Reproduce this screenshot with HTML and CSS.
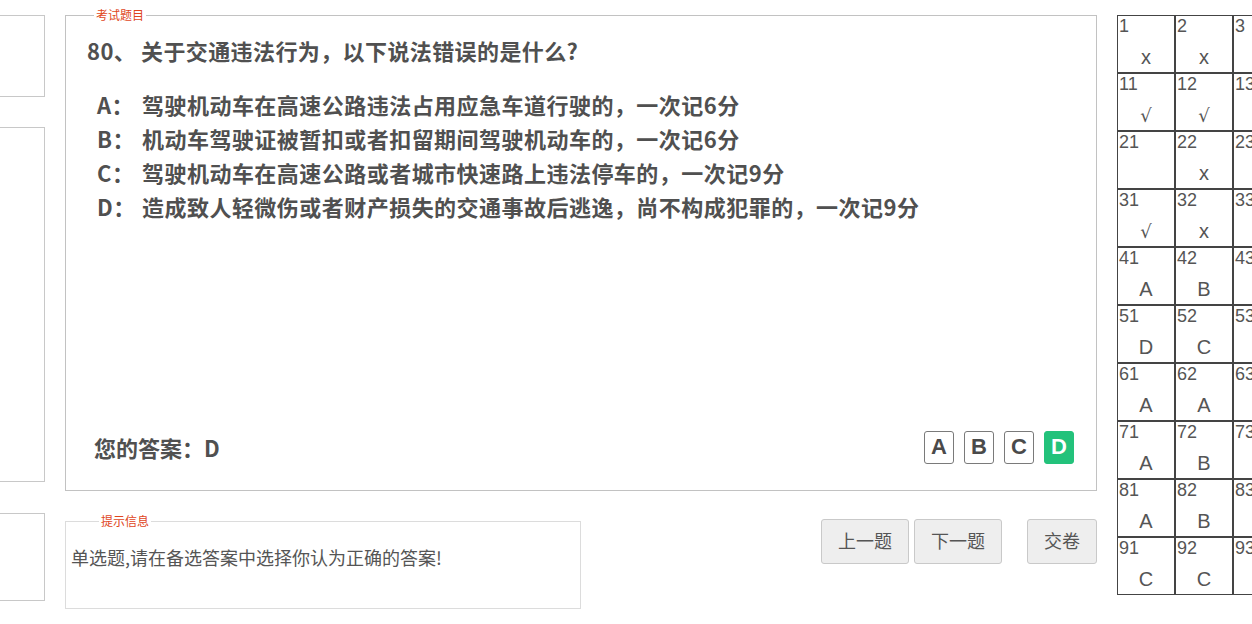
FILE: index.html
```html
<!DOCTYPE html>
<html lang="zh-CN">
<head>
<meta charset="utf-8">
<title>考试</title>
<link rel="stylesheet" href="styles.css">
</head>
<body>
<div class="page">
  <aside class="side">
    <div class="side-box b1"></div>
    <div class="side-box b2"></div>
    <div class="side-box b3"></div>
  </aside>

  <main class="main">
    <fieldset class="exam">
      <legend>考试题目</legend>
      <div class="exam-body">
        <h2 class="q"><span class="q-no">80、</span>关于交通违法行为，以下说法错误的是什么?</h2>
        <ul class="opts">
          <li><span class="k">A：</span>驾驶机动车在高速公路违法占用应急车道行驶的，一次记6分</li>
          <li><span class="k">B：</span>机动车驾驶证被暂扣或者扣留期间驾驶机动车的，一次记6分</li>
          <li><span class="k">C：</span>驾驶机动车在高速公路或者城市快速路上违法停车的，一次记9分</li>
          <li><span class="k">D：</span>造成致人轻微伤或者财产损失的交通事故后逃逸，尚不构成犯罪的，一次记9分</li>
        </ul>
        <div class="answer-row">
          <div class="your">您的答案：D</div>
          <div class="choices">
            <span class="ch">A</span>
            <span class="ch">B</span>
            <span class="ch">C</span>
            <span class="ch on">D</span>
          </div>
        </div>
      </div>
    </fieldset>

    <div class="bottom">
      <fieldset class="hint">
        <legend>提示信息</legend>
        <p>单选题,请在备选答案中选择你认为正确的答案!</p>
      </fieldset>
      <div class="nav">
        <button class="btn">上一题</button>
        <button class="btn">下一题</button>
        <button class="btn submit">交卷</button>
      </div>
    </div>
  </main>

  <section class="card-wrap">
    <table class="card">
      <tr><td><div class="n">1</div><div class="m">x</div></td><td><div class="n">2</div><div class="m">x</div></td><td><div class="n">3</div></td></tr>
      <tr><td><div class="n">11</div><div class="m tick">√</div></td><td><div class="n">12</div><div class="m tick">√</div></td><td><div class="n">13</div></td></tr>
      <tr><td><div class="n">21</div><div class="m"></div></td><td><div class="n">22</div><div class="m">x</div></td><td><div class="n">23</div></td></tr>
      <tr><td><div class="n">31</div><div class="m tick">√</div></td><td><div class="n">32</div><div class="m">x</div></td><td><div class="n">33</div></td></tr>
      <tr><td><div class="n">41</div><div class="m">A</div></td><td><div class="n">42</div><div class="m">B</div></td><td><div class="n">43</div></td></tr>
      <tr><td><div class="n">51</div><div class="m">D</div></td><td><div class="n">52</div><div class="m">C</div></td><td><div class="n">53</div></td></tr>
      <tr><td><div class="n">61</div><div class="m">A</div></td><td><div class="n">62</div><div class="m">A</div></td><td><div class="n">63</div></td></tr>
      <tr><td><div class="n">71</div><div class="m">A</div></td><td><div class="n">72</div><div class="m">B</div></td><td><div class="n">73</div></td></tr>
      <tr><td><div class="n">81</div><div class="m">A</div></td><td><div class="n">82</div><div class="m">B</div></td><td><div class="n">83</div></td></tr>
      <tr><td><div class="n">91</div><div class="m">C</div></td><td><div class="n">92</div><div class="m">C</div></td><td><div class="n">93</div></td></tr>
    </table>
  </section>
</div>
</body>
</html>
```

FILE: styles.css
```css
html, body {
  margin: 0;
  padding: 0;
  background: #fff;
  overflow: hidden;
}

body {
  font-family: "Noto Sans CJK SC", "Liberation Sans", sans-serif;
  color: #555;
  width: 1252px;
  height: 624px;
}

.page {
  display: flex;
  gap: 20px;
  padding-top: 7px;
  align-items: flex-start;
}

/* left placeholder boxes (cut off at the viewport edge) */
.side {
  flex: 0 0 45px;
  margin-top: 8px;
  display: flex;
  flex-direction: column;
}
.side-box {
  box-sizing: border-box;
  width: 45px;
  border: 1px solid #c8c8c8;
  border-left: none;
}
.b1 { height: 82px; }
.b2 { height: 355px; margin-top: 30px; }
.b3 { height: 88px; margin-top: 31px; }

/* main column */
.main {
  flex: 0 0 1032px;
  display: flex;
  flex-direction: column;
}

.exam {
  margin: 0;
  padding: 0;
  border: 1px solid #c2c2c2;
  min-width: 0;
}
.exam legend,
.hint legend {
  font-size: 12px;
  line-height: 16px;
  color: #e0461c;
  padding: 0 2px;
  margin-left: 28px;
}
.hint legend { margin-left: 33px; }

.exam-body {
  box-sizing: border-box;
  height: 467px;
  padding: 10px 22px 26px 21px;
  display: flex;
  flex-direction: column;
}

.q {
  margin: 0;
  font-size: 22px;
  line-height: 34px;
  font-weight: bold;
  letter-spacing: 0.4px;
  color: #505050;
}
.q-no {
  display: inline-block;
  width: 54px;
}

.opts {
  list-style: none;
  margin: 20px 0 0;
  padding: 0 0 0 10px;
  font-size: 22px;
  line-height: 34px;
  font-weight: bold;
  letter-spacing: 0.47px;
  color: #505050;
}
.opts .k {
  display: inline-block;
  width: 45px;
}

.answer-row {
  margin-top: auto;
  height: 34px;
  display: flex;
  align-items: center;
  justify-content: space-between;
  padding-left: 7px;
}
.your {
  font-size: 22px;
  font-weight: bold;
  color: #505050;
}
.choices {
  display: flex;
  gap: 10px;
}
.ch {
  box-sizing: border-box;
  width: 30px;
  height: 33px;
  display: flex;
  align-items: center;
  justify-content: center;
  border: 1px solid #7a7a7a;
  border-radius: 3px;
  font-family: "Liberation Sans", sans-serif;
  font-weight: bold;
  font-size: 22px;
  color: #4a4a4a;
}
.ch.on {
  background: #23c27b;
  border-color: #23c27b;
  color: #fff;
}

/* bottom row */
.bottom {
  margin-top: 22px;
  display: flex;
  justify-content: space-between;
  align-items: flex-start;
}
.hint {
  box-sizing: border-box;
  width: 516px;
  margin: 0;
  padding: 0;
  border: 1px solid #dcdcdc;
  min-width: 0;
}
.hint p {
  margin: 0;
  box-sizing: border-box;
  height: 79px;
  padding: 16px 5px 0;
  font-size: 18px;
  line-height: 24px;
  color: #555;
}

.nav {
  padding-top: 6px;
  display: flex;
  gap: 5px;
}
.btn {
  box-sizing: border-box;
  width: 88px;
  height: 45px;
  border: 1px solid #c9c9c9;
  border-radius: 3px;
  background: #eeeeee;
  font-family: "Noto Sans CJK SC", sans-serif;
  font-size: 18px;
  color: #555;
  padding: 0 0 3px;
}
.btn.submit {
  width: 70px;
  margin-left: 20px;
}

/* answer card */
.card-wrap {
  flex: 0 0 auto;
  margin-top: 8px;
}
.card {
  border-collapse: separate;
  border-spacing: 0;
  font-family: "Liberation Sans", sans-serif;
  color: #555;
}
.card td {
  box-sizing: border-box;
  width: 58px;
  min-width: 58px;
  height: 58px;
  padding: 0;
  border: 1px solid #444;
  vertical-align: top;
}
.card .n {
  font-size: 18px;
  line-height: 21px;
  padding-left: 1px;
}
.card .m {
  font-size: 20px;
  line-height: 23px;
  margin-top: 9px;
  text-align: center;
}
.card .m.tick {
  font-family: "DejaVu Serif", serif;
  font-size: 18px;
}
```
